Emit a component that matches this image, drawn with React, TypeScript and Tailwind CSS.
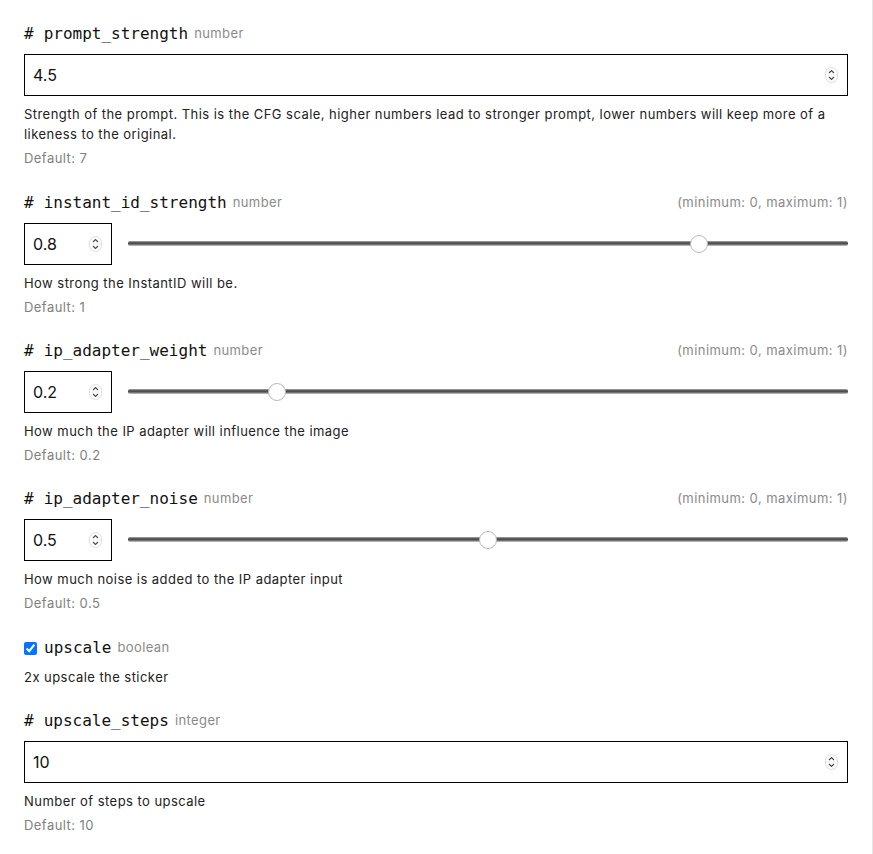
import type { ReactNode } from 'react'

type Field =
  | { kind: 'number'; name: string; type: string; value: string; desc: string; def: string }
  | { kind: 'range'; name: string; type: string; value: number; desc: string; def: string }
  | { kind: 'bool'; name: string; type: string; checked: boolean; desc: string }

const fields: Field[] = [
  {
    kind: 'number',
    name: 'prompt_strength',
    type: 'number',
    value: '4.5',
    desc: 'Strength of the prompt. This is the CFG scale, higher numbers lead to stronger prompt, lower numbers will keep more of a likeness to the original.',
    def: '7',
  },
  {
    kind: 'range',
    name: 'instant_id_strength',
    type: 'number',
    value: 0.8,
    desc: 'How strong the InstantID will be.',
    def: '1',
  },
  {
    kind: 'range',
    name: 'ip_adapter_weight',
    type: 'number',
    value: 0.2,
    desc: 'How much the IP adapter will influence the image',
    def: '0.2',
  },
  {
    kind: 'range',
    name: 'ip_adapter_noise',
    type: 'number',
    value: 0.5,
    desc: 'How much noise is added to the IP adapter input',
    def: '0.5',
  },
  { kind: 'bool', name: 'upscale', type: 'boolean', checked: true, desc: '2x upscale the sticker' },
  {
    kind: 'number',
    name: 'upscale_steps',
    type: 'integer',
    value: '10',
    desc: 'Number of steps to upscale',
    def: '10',
  },
]

const mono = { fontFamily: '"DejaVu Sans Mono", monospace' }

function Label({ name, type, lead, right }: { name: string; type: string; lead: ReactNode; right?: string }) {
  return (
    <div className="flex h-6 items-center">
      {lead}
      <span className="text-base text-[#111]" style={mono}>
        {name}
      </span>
      <span className="ml-[6px] text-[13px] tracking-[0.4px] text-[#8a8a8a]">{type}</span>
      {right ? <span className="ml-auto text-[13px] tracking-[0.45px] text-[#8a8a8a]">{right}</span> : null}
    </div>
  )
}

// native-looking stepper drawn since headless chrome hides it until hover
function Spinner() {
  return (
    <svg
      width="13"
      height="16"
      viewBox="0 0 13 16"
      className="pointer-events-none absolute right-[10px] top-1/2 -translate-y-1/2"
    >
      <rect x="0.5" y="0.5" width="12" height="15" rx="6" fill="white" stroke="#dcdcdc" />
      <line x1="1" y1="8" x2="12" y2="8" stroke="#ececec" />
      <path d="M4 6 L6.5 3.5 L9 6" fill="none" stroke="#4a4a4a" strokeWidth="1.2" />
      <path d="M4 10 L6.5 12.5 L9 10" fill="none" stroke="#4a4a4a" strokeWidth="1.2" />
    </svg>
  )
}

function NumberBox({ value, className }: { value: string | number; className: string }) {
  return (
    <div className={`relative ${className}`}>
      <input
        type="number"
        defaultValue={value}
        step="any"
        className="block h-[42px] w-full border border-black px-2 text-base text-[#111] outline-none [appearance:textfield] [&::-webkit-inner-spin-button]:appearance-none [&::-webkit-outer-spin-button]:appearance-none"
      />
      <Spinner />
    </div>
  )
}

function Slider({ value }: { value: number }) {
  return (
    <div className="relative h-[18px] flex-1">
      <div className="absolute left-0 right-0 top-[6px] h-[5px] rounded-[2px] bg-[linear-gradient(to_bottom,#b0b0b0,#5a5a5a_30%,#4e4e4e_55%,#8a8a8a_80%,#d8d8d8)]" />
      <div
        className="absolute top-0 h-[18px] w-[18px] rounded-full border border-[#b8b8b8] bg-white"
        style={{ left: `calc((100% - 18px) * ${value})` }}
      />
    </div>
  )
}

function Help({ desc, def }: { desc: string; def?: string }) {
  return (
    <div className="mt-2 tracking-[0.45px]">
      <p className="text-[13px] leading-5 text-[#222]">{desc}</p>
      {def ? <p className="mt-1 text-[13px] leading-5 text-[#808080]">Default: {def}</p> : null}
    </div>
  )
}

export default function App() {
  return (
    <div
      className="min-h-screen w-full border-r border-[#e6e6e6] bg-white px-6 pt-[22px]"
      style={{ fontFamily: 'Inter, "Liberation Sans", sans-serif' }}
    >
      <div className="flex flex-col gap-[22px]">
        {fields.map((f, i) => {
          if (f.kind === 'bool') {
            return (
              <div key={f.name} className="pt-[1px]">
                <Label
                  name={f.name}
                  type={f.type}
                  lead={<input type="checkbox" defaultChecked={f.checked} className="mr-[7px] h-[13px] w-[13px]" />}
                />
                <p className="mt-[7px] text-[13px] leading-5 tracking-[0.45px] text-[#222]">{f.desc}</p>
              </div>
            )
          }
          const hash = (
            <span className="mr-[10px] text-base text-[#111]" style={mono}>
              #
            </span>
          )
          if (f.kind === 'range') {
            return (
              <div key={f.name}>
                <Label name={f.name} type={f.type} lead={hash} right="(minimum: 0, maximum: 1)" />
                <div className="mt-2 flex items-center gap-4">
                  <NumberBox value={f.value} className="w-[88px]" />
                  <Slider value={f.value} />
                </div>
                <Help desc={f.desc} def={f.def} />
              </div>
            )
          }
          return (
            <div key={f.name} className={i === 0 ? 'pb-[1px]' : ''}>
              <Label name={f.name} type={f.type} lead={hash} />
              <NumberBox value={f.value} className="mt-2 w-full" />
              <Help desc={f.desc} def={f.def} />
            </div>
          )
        })}
      </div>
    </div>
  )
}
